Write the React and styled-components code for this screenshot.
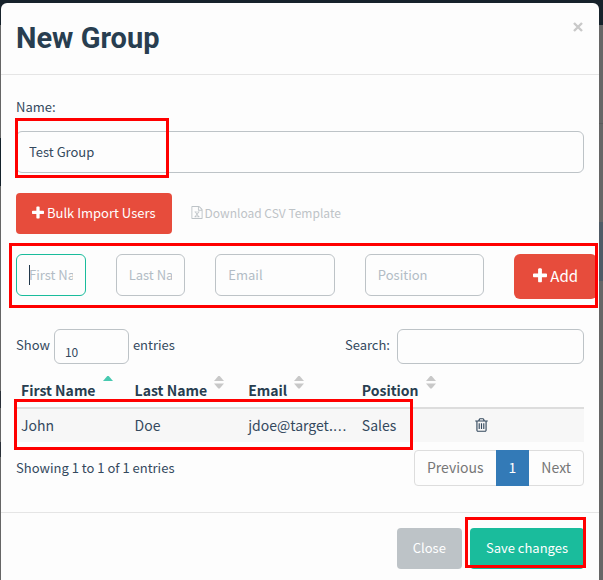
import React from "react";
import styled, { createGlobalStyle, css } from "styled-components";

const GlobalStyle = createGlobalStyle`
  *, *::before, *::after { box-sizing: border-box; }
  body {
    margin: 0;
    background: #666;
    color: #34495e;
    font: 13px/22px "Noto Sans CJK SC", "Noto Sans", sans-serif;
  }
  button, input, select { font: inherit; color: inherit; margin: 0; }
`;

const Backdrop = styled.div`
  min-height: 100vh;
  padding: 3px 4px 0 1px;
  display: flex;
  background:
    linear-gradient(#17222b 0 22px, #14212a 22px 25px, transparent 25px) 0 0 / 100% 25px no-repeat,
    linear-gradient(transparent 138px, #14212a 138px 186px, transparent 186px 391px,
      #2a3038 391px 408px, transparent 408px 442px, #2a3038 442px 457px, transparent 457px)
      0 0 / 1px 100% no-repeat,
    linear-gradient(transparent 123px, #5b5b5b 123px 124px, transparent 124px 222px,
      #4f5b66 222px 281px, transparent 281px) 100% 0 / 4px 100% no-repeat,
    #666;
`;

const Modal = styled.form`
  flex: 1;
  min-width: 0;
  display: flex;
  flex-direction: column;
  background: #fdfdfd;
  border-radius: 6px 6px 0 0;
`;

const Header = styled.header`
  display: flex;
  justify-content: space-between;
  align-items: flex-start;
  padding: 15px;
  border-bottom: 1px solid #e5e5e5;
`;

const Title = styled.h1`
  margin: 0;
  font: bold 29px/40px Roboto, sans-serif;
  padding-bottom: 1px;
  color: #283e50;
`;

const Dismiss = styled.button`
  border: 0;
  padding: 0;
  width: 12px;
  height: 18px;
  display: grid;
  place-items: center;
  background: none;
  color: #c9c9c9;
`;

const Body = styled.div`
  padding: 21px 15px 26px;
`;

const Footer = styled.footer`
  display: flex;
  justify-content: flex-end;
  gap: 8px;
  padding: 15px 15px 10px;
  border-top: 1px solid #e5e5e5;
`;

const Label = styled.label`
  display: block;
  margin-bottom: 13px;
`;

const control = css`
  width: ${(p) => p.$width || "100%"};
  height: ${(p) => (p.$compact ? "35px" : "42px")};
  padding: 0 12px 2px;
  border: 1px solid ${(p) => (p.$active ? "#1abc9c" : "#bdc3c7")};
  border-radius: 6px;
  background: transparent;
  outline: 0;
`;

const Input = styled.input`
  ${control}
  display: block;
  &::placeholder { color: #b2bcc5; opacity: 1; }
`;

const Select = styled.select`
  ${control}
  padding: 6px 10px 0;
  appearance: none;
  font-size: 12px;
`;

const Highlight = styled.span`
  position: absolute;
  inset: ${(p) => p.$inset};
  width: ${(p) => p.$width || "auto"};
  height: ${(p) => p.$height || "auto"};
  border: 3px solid #f00;
  pointer-events: none;
`;

const Marked = styled.div`
  position: relative;
`;

const Button = styled.button`
  display: inline-flex;
  align-items: center;
  justify-content: center;
  gap: 3px;
  height: ${(p) => (p.$large ? "45px" : "41px")};
  padding: ${(p) => (p.$large ? "0 19px 1px" : "0 16px 2px")};
  border: 0;
  border-radius: ${(p) => (p.$large ? "6px" : "4px")};
  background: ${(p) => p.$color};
  color: #fff;
  font-size: ${(p) => (p.$large ? "15px" : "13px")};
  white-space: nowrap;
`;

const ImportRow = styled.div`
  display: flex;
  align-items: center;
  gap: 19px;
  margin: 20px 0;
`;

const TemplateLink = styled.a`
  display: inline-flex;
  align-items: center;
  gap: 2px;
  padding-bottom: 2px;
  color: #bdc3c7;
  font-size: 12px;
  text-decoration: none;
`;

const FieldGrid = styled.div`
  position: relative;
  display: grid;
  grid-template-columns: repeat(2, minmax(0, 2fr)) repeat(2, minmax(0, 3fr)) minmax(0, 2fr);
  margin: 0 -15px 30px;
`;

const Cell = styled.div`
  position: relative;
  padding: 0 15px;
  ${(p) => p.$caret && css`
    &::after {
      content: "";
      position: absolute;
      left: 28px;
      top: 11px;
      width: 1px;
      height: 20px;
      background: #22384b;
    }
  `}
`;

const Controls = styled.div`
  display: flex;
  justify-content: space-between;
  align-items: flex-start;
`;

const ControlLabel = styled.label`
  display: flex;
  align-items: flex-start;
  gap: ${(p) => p.$gap};
  line-height: 31px;
  white-space: nowrap;
`;

const Table = styled.table`
  width: 100%;
  table-layout: fixed;
  border-collapse: separate;
  border-spacing: 0;
  font-size: 14px;
`;

const Th = styled.th`
  padding: 15px 0 6px 5px;
  border-bottom: 2px solid #ddd;
  text-align: left;
  white-space: nowrap;
  line-height: 22px;
  color: #283e50;
`;

const Td = styled.td`
  height: 33px;
  padding: 4px 5px 6px;
  background: #f7f7f7;
  white-space: nowrap;
`;

const Ellipsis = styled.span`
  font-family: "DejaVu Sans", sans-serif;
  line-height: 0;
`;

const IconButton = styled.button`
  display: block;
  padding: 0;
  border: 0;
  background: none;
`;

const Icon = styled.svg`
  display: block;
  flex: none;
  fill: currentColor;
`;

const SortIcon = styled.svg`
  margin: -6px 0 0 7px;
  vertical-align: 7px;
`;

const TableFooter = styled.div`
  display: flex;
  justify-content: space-between;
  align-items: center;
  margin-top: 8px;
`;

const Pagination = styled.nav`
  display: flex;
  height: 36px;
  border: 1px solid #ddd;
  border-radius: 4px;
  font-size: 14px;
`;

const PageLink = styled.a`
  display: flex;
  align-items: center;
  margin: ${(p) => (p.$current ? "-1px 0" : "0")};
  padding: 0 ${(p) => (p.$current ? "13px" : "12px")} 2px;
  color: ${(p) => (p.$current ? "#fff" : "#777")};
  background: ${(p) => (p.$current ? "#337ab7" : "transparent")};
  text-decoration: none;
`;

const paths = {
  plus: "M1600 736v192q0 40-28 68t-68 28h-416v416q0 40-28 68t-68 28h-192q-40 0-68-28t-28-68v-416h-416q-40 0-68-28t-28-68v-192q0-40 28-68t68-28h416v-416q0-40 28-68t68-28h192q40 0 68 28t28 68v416h416q40 0 68 28t28 68z",
  trash: "M704 736v576q0 14-9 23t-23 9h-64q-14 0-23-9t-9-23v-576q0-14 9-23t23-9h64q14 0 23 9t9 23zm256 0v576q0 14-9 23t-23 9h-64q-14 0-23-9t-9-23v-576q0-14 9-23t23-9h64q14 0 23 9t9 23zm256 0v576q0 14-9 23t-23 9h-64q-14 0-23-9t-9-23v-576q0-14 9-23t23-9h64q14 0 23 9t9 23zm128 724v-948h-896v948q0 22 7 40.5t14.5 27 10.5 8.5h832q3 0 10.5-8.5t14.5-27 7-40.5zm-672-1076h448l-48-117q-7-9-17-11h-317q-10 2-17 11zm928 32v64q0 14-9 23t-23 9h-96v948q0 83-47 143.5t-113 60.5h-832q-66 0-113-58.5t-47-141.5v-952h-96q-14 0-23-9t-9-23v-64q0-14 9-23t23-9h309l70-167q15-37 54-63t79-26h320q40 0 79 26t54 63l70 167h309q14 0 23 9t9 23z",
  excel: "M1596 380q28 28 48 76t20 88v1152q0 40-28 68t-68 28h-1344q-40 0-68-28t-28-68v-1600q0-40 28-68t68-28h896q40 0 88 20t76 48zm-444-244v376h376q-10-29-22-41l-313-313q-12-12-41-22zm384 1528v-1024h-416q-40 0-68-28t-28-68v-416h-768v1536h1280zm-979-234v106h281v-106h-75l103-161q5-7 10-16.5t7.5-13.5 3.5-4h2q1 4 5 10 2 4 4.5 7.5t6 8 6.5 8.5l107 161h-76v106h291v-106h-68l-192-273 195-282h67v-107h-279v107h74l-103 159q-4 7-10 16.5t-9 13.5l-2 3h-2q-1-4-5-10-6-11-17-23l-106-159h76v-107h-290v107h68l189 272-194 283h-68z",
};

function Glyph({ name, size, box = "192 0 1408 1792", width }) {
  return (
    <Icon viewBox={box} width={width} height={size} aria-hidden="true">
      <path d={paths[name]} />
    </Icon>
  );
}

function Sort({ ascending }) {
  return (
    <SortIcon width="10" height="14" viewBox="0 0 10 14" aria-hidden="true">
      <path d="M0 6 4.3 1h1.4L10 6z" fill={ascending ? "#48c9b0" : "#c8c8c8"} />
      {!ascending && <path d="M0 8.5h10L5.7 13.5H4.3z" fill="#c8c8c8" />}
    </SortIcon>
  );
}

const columns = ["First Name", "Last Name", "Email", "Position"];

export default function App() {
  return (
    <>
      <GlobalStyle />
      <Backdrop>
        <Modal role="dialog" aria-labelledby="title" onSubmit={(e) => e.preventDefault()}>
          <Header>
            <Title id="title">New Group</Title>
            <Dismiss type="button" aria-label="Close dialog">
              <svg width="10" height="10" viewBox="0 0 10 10" aria-hidden="true">
                <path d="M1 1 9 9M9 1 1 9" stroke="currentColor" strokeWidth="2.4" />
              </svg>
            </Dismiss>
          </Header>
          <Body>
            <Label htmlFor="name">Name:</Label>
            <Marked>
              <Input id="name" defaultValue="Test Group" />
              <Highlight $inset="-13px auto -5px -1px" $width="154px" />
            </Marked>
            <ImportRow>
              <Button type="button" $color="#e74c3c">
                <Glyph name="plus" size="16" width="12" />
                Bulk Import Users
              </Button>
              <TemplateLink href="#template">
                <Glyph name="excel" size="13" width="12" box="128 0 1536 1792" />
                Download CSV Template
              </TemplateLink>
            </ImportRow>
            <FieldGrid>
              <Cell $caret><Input aria-label="First Name" placeholder="First Name" $active /></Cell>
              <Cell><Input aria-label="Last Name" placeholder="Last Name" /></Cell>
              <Cell><Input aria-label="Email" placeholder="Email" /></Cell>
              <Cell><Input aria-label="Position" placeholder="Position" /></Cell>
              <Cell>
                <Button type="button" $large $color="#e74c3c">
                  <Glyph name="plus" size="18" width="14" />
                  Add
                </Button>
              </Cell>
              <Highlight $inset="-11px 1px -9px 8px" />
            </FieldGrid>
            <Controls>
              <ControlLabel $gap="4px">
                Show
                <Select $compact $width="75px" defaultValue="10">
                  <option>10</option>
                  <option>25</option>
                  <option>50</option>
                </Select>
                entries
              </ControlLabel>
              <ControlLabel $gap="7px">
                Search:
                <Input type="search" $compact $width="187px" />
              </ControlLabel>
            </Controls>
            <Marked>
              <Table>
                <thead>
                  <tr>
                    {columns.map((name, i) => (
                      <Th key={name} scope="col">
                        {name}
                        <Sort ascending={i === 0} />
                      </Th>
                    ))}
                    <Th aria-label="Actions" />
                  </tr>
                </thead>
                <tbody>
                  <tr>
                    <Td>John</Td>
                    <Td>Doe</Td>
                    <Td>jdoe@target.<Ellipsis>…</Ellipsis></Td>
                    <Td>Sales</Td>
                    <Td>
                      <IconButton type="button" aria-label="Delete user">
                        <Glyph name="trash" size="16" width="13" />
                      </IconButton>
                    </Td>
                  </tr>
                </tbody>
              </Table>
              <Highlight $inset="auto auto -8px -2px" $width="399px" $height="51px" />
            </Marked>
            <TableFooter>
              <span>Showing 1 to 1 of 1 entries</span>
              <Pagination aria-label="Pages">
                <PageLink href="#previous">Previous</PageLink>
                <PageLink href="#1" $current aria-current="page">1</PageLink>
                <PageLink href="#next">Next</PageLink>
              </Pagination>
            </TableFooter>
          </Body>
          <Footer>
            <Button type="button" $color="#bdc3c7">Close</Button>
            <Marked>
              <Button type="submit" $color="#1abc9c">Save changes</Button>
              <Highlight $inset="-11px -2px 1px -5px" />
            </Marked>
          </Footer>
        </Modal>
      </Backdrop>
    </>
  );
}
